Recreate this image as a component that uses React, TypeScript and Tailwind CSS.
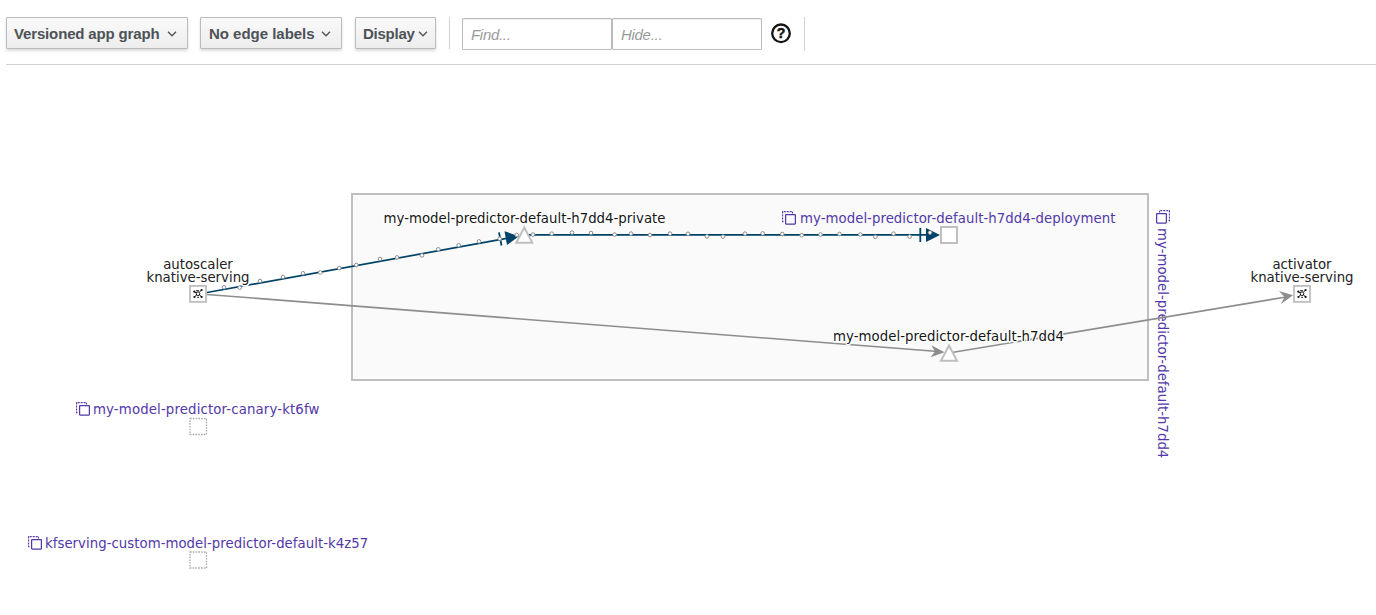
import React from "react";

const BLUE = "#004368";
const GRAY = "#8b8d8f";
const TOP = 65;

const firstEdgeDots = [
  [224, 287.3], [239.7, 287.6], [260, 281], [283, 277], [303, 273.3], [320.3, 272.5], [339.3, 268], [356.3, 265],
  [380, 259], [397, 257.4], [422, 255.4], [438.3, 249.3], [458.7, 245.3], [479, 241.4], [499.7, 238.7], [516.7, 235],
];
const secondEdgeDots = [
  [533, 234.6], [551.7, 233.7], [572, 232.6], [591, 233], [614.6, 234.6], [631, 233.6], [650, 235], [670, 233.6],
  [688, 233.8], [707, 236.4], [723, 236.6], [745, 233.6], [762.7, 233.4], [782.3, 234], [801.7, 235.2],
  [820.5, 234.5], [839.5, 234], [860.3, 234.5], [875.3, 236.8], [893.5, 233.7], [909.7, 236.6], [930, 232.6],
];

function MenuButton({ label, className }: { label: string; className: string }) {
  return (
    <button
      className={`flex h-8 items-center justify-between rounded-[1px] border border-[#bbb] bg-linear-to-b from-[#fafafa] to-[#ededed] pl-[7px] text-[15px] font-bold whitespace-nowrap text-[#4d5258] shadow-[0_2px_3px_rgba(3,3,3,0.14)] ${className}`}
    >
      <span className="pt-[2px]">{label}</span>
      <svg width="10" height="6" viewBox="0 0 10 6" fill="none" stroke="#4d5258" strokeWidth="1.3" className="mt-px">
        <path d="M1 0.8 L5 4.8 L9 0.8" />
      </svg>
    </button>
  );
}

function Copies({ flip = false }: { flip?: boolean }) {
  return (
    <svg width="14" height="14" viewBox="0 0 14 14" fill="none" stroke="#5238a8" className={`shrink-0 ${flip ? "-scale-x-100" : ""}`}>
      <rect x="3.6" y="3.6" width="9.8" height="9.4" rx="0.5" strokeWidth="1.25" />
      <path d="M1.5 10.6 H0.6 V0.6 H10.5 V2.4" strokeWidth="1.1" strokeDasharray="2 1" />
    </svg>
  );
}

function Dots({ points }: { points: number[][] }) {
  return (
    <g fill="#fff" stroke="#8b8d8f" strokeWidth="1">
      {points.map(([x, y]) => (
        <circle key={x} cx={x} cy={y} r="1.8" />
      ))}
    </g>
  );
}

function Topology({ x, y }: { x: number; y: number }) {
  return (
    <g transform={`translate(${x} ${y})`}>
      <rect x="-8" y="-7.8" width="16" height="16" fill="#fff" stroke="#bbb" strokeWidth="1.7" />
      <g stroke="#151515" strokeWidth="1" fill="none">
        <path d="M-3.6 -1.8 L-1 -0.6 M3.6 -3.8 L1 -1 M-3.6 3.4 L-1.2 1 M3.6 3.2 L1.2 1 M-2 -3 H1 M-0.7 3.6 H1" />
        <circle cx="0" cy="0" r="1.8" fill="#fff" />
      </g>
      <g fill="#151515">
        <circle cx="-3.7" cy="-2" r="1.1" />
        <circle cx="3.6" cy="-3.7" r="1.1" />
        <circle cx="-3.6" cy="3.3" r="1.1" />
        <circle cx="3.6" cy="3.2" r="1.1" />
      </g>
    </g>
  );
}

const labelBase =
  "absolute whitespace-nowrap text-[13.3px] leading-[13px] font-['DejaVu_Sans',Verdana,sans-serif]";
const halo = "[text-shadow:0_0_1px_#fff,1px_0_1px_#fff,-1px_0_1px_#fff,0_1px_1px_#fff,0_-1px_1px_#fff,0_2px_1px_#fff,1px_1px_0_#fff,-1px_1px_0_#fff]";

export default function App() {
  return (
    <div className="flex h-[615px] w-[1376px] flex-col overflow-hidden bg-white font-['Liberation_Sans',Arial,sans-serif]">
      <header className="ml-[6px] flex h-[65px] shrink-0 items-start border-b border-[#d1d1d1] pt-[17px]">
        <MenuButton label="Versioned app graph" className="w-[182px] pr-[10px] tracking-[-0.15px]" />
        <MenuButton label="No edge labels" className="ml-3 w-[142px] pr-[10px] pl-[8px] tracking-[-0.02px]" />
        <MenuButton label="Display" className="ml-[13px] w-[81px] pr-[7px] tracking-[-0.25px]" />
        <div className="ml-[13px] h-8 w-px bg-[#d1d1d1]" />
        <div className="mt-px ml-3 flex">
          <input
            placeholder="Find..."
            className="h-8 w-[150px] rounded-[1px] border border-[#bbb] px-2 text-[15px] tracking-[-0.3px] italic shadow-[inset_0_1px_1px_rgba(3,3,3,0.075)] placeholder:text-[#999]"
          />
          <input
            placeholder="Hide..."
            className="h-8 w-[150px] rounded-[1px] border border-[#bbb] px-2 text-[15px] tracking-[-0.3px] italic shadow-[inset_0_1px_1px_rgba(3,3,3,0.075)] placeholder:text-[#999]"
          />
        </div>
        <svg className="mt-[6px] ml-[9px]" width="20" height="21" viewBox="0 0 20 21">
          <circle cx="10" cy="10.3" r="8.8" fill="none" stroke="#151515" strokeWidth="2.3" />
          <text
            x="10"
            y="15.3"
            textAnchor="middle"
            fill="#151515"
            stroke="#151515"
            strokeWidth="0.5"
            className="font-['Liberation_Sans',Arial,sans-serif] text-[14px] font-bold"
          >
            ?
          </text>
        </svg>
        <div className="ml-[13px] h-[34px] w-px bg-[#d1d1d1]" />
      </header>

      <main className="relative grow">
        <div className="absolute top-[128px] left-[351px] h-[188px] w-[798px] border-2 border-[#bfbfbf] bg-[#fafafa]" />
        <div className={`${labelBase} top-[145px] left-[1156px] flex flex-col items-center gap-1 text-[#5238a8]`}>
          <Copies flip />
          <span className="-ml-[2px] tracking-[0.03px] [writing-mode:vertical-rl]">my-model-predictor-default-h7dd4</span>
        </div>

        <svg className="absolute inset-0" width="1376" height="550" viewBox={`0 ${TOP} 1376 550`}>
          <g stroke={GRAY} strokeWidth="1.6" fill="none">
            <path d="M207 294.5 L938 351.5" />
            <path d="M949 353 L1286 297" />
          </g>
          <path d="M944.5 352.2 L930.5 357.3 L935 351.4 L931.4 345.2 Z" fill={GRAY} />
          <path d="M1293 295.2 L1281 304 L1284.5 297 L1279 291 Z" fill={GRAY} />
          <path d="M207 292.5 L508 238.2 M524 234.8 H930" stroke={BLUE} strokeWidth="1.7" fill="none" />
          <path d="M499 232.4 L501.5 245.5 M920.3 228 V242" stroke={BLUE} strokeWidth="1.8" />
          <path d="M504.5 231.2 L519 236.2 L507 245 Z M926 228 L940 235 L926 242 Z" fill={BLUE} />
          <Dots points={firstEdgeDots} />
          <g fill="#fff" stroke="#bfbfbf" strokeWidth="2">
            <path d="M524.3 227.5 L532.3 242.8 H516.3 Z" />
            <path d="M949 345.5 L957 360.8 H941 Z" />
            <rect x="941" y="227" width="16" height="16" />
          </g>
          <Dots points={secondEdgeDots} />
          <Topology x={198} y={293.7} />
          <Topology x={1302} y={293.7} />
          <g fill="#fff" stroke="#aaa" strokeWidth="1.3" strokeDasharray="1.6 1.2">
            <rect x="190" y="418.5" width="16.5" height="16" />
            <rect x="190" y="552" width="16.5" height="16" />
          </g>
        </svg>

        <div className={`${labelBase} ${halo} top-[193px] left-[98px] w-[200px] text-center text-[#222]`}>
          autoscaler<br />knative-serving
        </div>
        <div className={`${labelBase} ${halo} top-[193px] left-[1202px] w-[200px] text-center text-[#222]`}>
          activator<br />knative-serving
        </div>
        <div className={`${labelBase} ${halo} top-[147px] left-[383.5px] tracking-[0.02px] text-[#151515]`}>
          my-model-predictor-default-h7dd4-private
        </div>
        <div className={`${labelBase} ${halo} top-[265px] left-[833px] tracking-[0.05px] text-[#151515]`}>
          my-model-predictor-default-h7dd4
        </div>
        <div className={`${labelBase} top-[145px] left-[782px] flex items-center gap-1 text-[#5238a8]`}>
          <Copies />
          <span className="pt-[2px] tracking-[0.04px]">my-model-predictor-default-h7dd4-deployment</span>
        </div>
        <div className={`${labelBase} top-[337px] left-[76px] flex items-center gap-1 text-[#5238a8]`}>
          <Copies />
          <span className="-ml-px tracking-[0.14px]">my-model-predictor-canary-kt6fw</span>
        </div>
        <div className={`${labelBase} top-[470px] left-[28px] flex items-center gap-1 text-[#5238a8]`}>
          <Copies />
          <span className="-ml-px pt-[2px] tracking-[0.03px]">kfserving-custom-model-predictor-default-k4z57</span>
        </div>
      </main>
    </div>
  );
}
